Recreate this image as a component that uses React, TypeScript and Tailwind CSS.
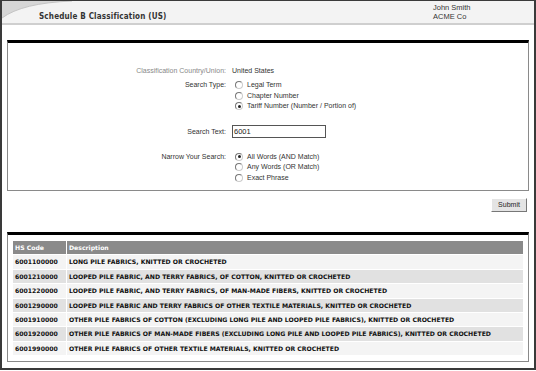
import React from 'react';

const rows: [string, string][] = [
  ['6001100000', 'LONG PILE FABRICS, KNITTED OR CROCHETED'],
  ['6001210000', 'LOOPED PILE FABRIC, AND TERRY FABRICS, OF COTTON, KNITTED OR CROCHETED'],
  ['6001220000', 'LOOPED PILE FABRIC, AND TERRY FABRICS, OF MAN-MADE FIBERS, KNITTED OR CROCHETED'],
  ['6001290000', 'LOOPED PILE FABRIC AND TERRY FABRICS OF OTHER TEXTILE MATERIALS, KNITTED OR CROCHETED'],
  ['6001910000', 'OTHER PILE FABRICS OF COTTON (EXCLUDING LONG PILE AND LOOPED PILE FABRICS), KNITTED OR CROCHETED'],
  ['6001920000', 'OTHER PILE FABRICS OF MAN-MADE FIBERS (EXCLUDING LONG PILE AND LOOPED PILE FABRICS), KNITTED OR CROCHETED'],
  ['6001990000', 'OTHER PILE FABRICS OF OTHER TEXTILE MATERIALS, KNITTED OR CROCHETED'],
];

const Radio = ({ checked, label }: { checked?: boolean; label: string }) => (
  <div className="flex items-center h-[10.5px]">
    <span className="w-[8px] h-[8px] rounded-full border border-t-[#777] border-l-[#777] border-r-[#ccc] border-b-[#ccc] bg-white flex items-center justify-center mr-[4px]">
      {checked && <span className="w-[3px] h-[3px] rounded-full bg-[#222]" />}
    </span>
    <span>{label}</span>
  </div>
);

export default function App() {
  return (
    <div className="w-[536px] h-[371px] bg-white overflow-hidden font-['Liberation_Sans',Arial,sans-serif]">
      <div className="w-[536px] h-[370px] border-l-2 border-r-2 border-b-2 border-t border-[#3a3a3a] flex flex-col">
        {/* header */}
        <div className="relative h-[24px] bg-[#f3f3f3] border-b-2 border-[#cfcfcf] flex">
          <svg className="absolute left-0 top-0" width="70" height="18" viewBox="0 0 70 18">
            <path d="M0 0 H70 Q20 2 0 17 Z" fill="#d6d6d6" />
            <path d="M0 17 Q20 2 70 0" fill="none" stroke="#c4c4c4" strokeWidth="1" />
          </svg>
          <div className="relative flex-1 pl-[37px] pt-[9px]">
            <div className="text-[8.5px] font-bold text-[#333] tracking-[0.2px] font-['DejaVu_Sans',Verdana,sans-serif] scale-x-[0.85] origin-left whitespace-nowrap">
              Schedule B Classification (US)
            </div>
          </div>
          <div className="relative w-[101px] pt-[2px] text-[7.5px] leading-[9px] text-[#333]">
            <div>John Smith</div>
            <div>ACME Co</div>
          </div>
        </div>

        <div className="flex flex-col px-[5px] pt-[15px]">
          {/* search panel */}
          <div className="border-t-[3px] border-t-black border-x border-b border-[#8a8a8a] pt-[23px] pb-[7px] text-[7px] text-[#333]">
            <div className="grid grid-cols-[218px_1fr] gap-x-[6px]">
              <div className="text-right text-[#888] leading-[10px]">Classification Country/Union:</div>
              <div className="leading-[10px]">United States</div>

              <div className="text-right mt-[4px] leading-[10.5px]">Search Type:</div>
              <div className="mt-[4px] pl-[3px]">
                <Radio label="Legal Term" />
                <Radio label="Chapter Number" />
                <Radio checked label="Tariff Number (Number / Portion of)" />
              </div>

              <div className="text-right mt-[13px] leading-[13px]">Search Text:</div>
              <div className="mt-[13px]">
                <div className="w-[94px] h-[13px] border border-[#555] bg-white pl-[1px] leading-[11px] text-[7.5px] text-[#222]">6001</div>
              </div>

              <div className="text-right mt-[14px] leading-[10.5px]">Narrow Your Search:</div>
              <div className="mt-[14px] pl-[3px]">
                <Radio checked label="All Words (AND Match)" />
                <Radio label="Any Words (OR Match)" />
                <Radio label="Exact Phrase" />
              </div>
            </div>
          </div>

          <div className="flex justify-end pt-[7px] pr-[2px]">
            <button className="w-[36px] h-[14px] bg-[#e4e4e4] border border-t-white border-l-white border-r-[#777] border-b-[#777] text-[7px] text-[#222] leading-[12px]">
              Submit
            </button>
          </div>

          {/* results panel */}
          <div className="mt-[20px] border-t-[3px] border-t-black border-x border-b border-[#8a8a8a] px-[4px] pt-[5px] pb-[5px]">
            <table className="w-full border-separate border-spacing-[1px] font-['DejaVu_Sans',Verdana,sans-serif] text-[6.15px] font-bold">
              <thead>
                <tr className="bg-[#8a8a8a] text-white h-[13.4px]">
                  <th className="w-[53px] text-left pl-[2px] font-bold">HS Code</th>
                  <th className="text-left pl-[2px] font-bold">Description</th>
                </tr>
              </thead>
              <tbody>
                {rows.map(([code, desc], i) => (
                  <tr key={code} className={`h-[13.4px] text-[#111] ${i % 2 === 0 ? 'bg-[#f4f4f4]' : 'bg-[#e1e1e1]'}`}>
                    <td className="pl-[2px]">{code}</td>
                    <td className="pl-[2px] whitespace-nowrap">{desc}</td>
                  </tr>
                ))}
              </tbody>
            </table>
          </div>
        </div>
      </div>
    </div>
  );
}
